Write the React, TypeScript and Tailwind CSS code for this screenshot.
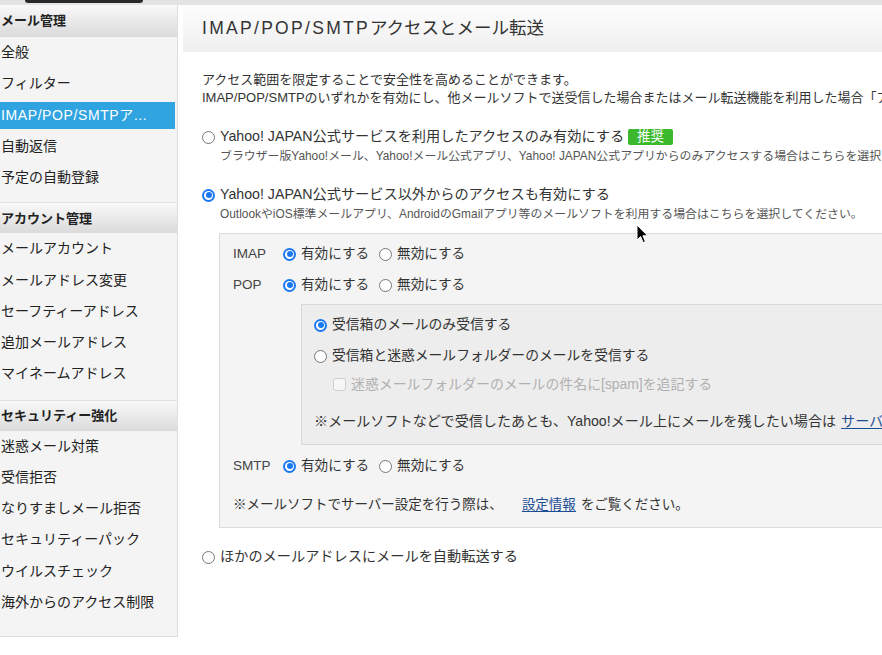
import type { ReactNode } from 'react'

type NavSection = { title: string; items: string[]; pb: string }

const SECTIONS: NavSection[] = [
  { title: 'メール管理', items: ['全般', 'フィルター', 'IMAP/POP/SMTPアクセスとメール転送', '自動返信', '予定の自動登録'], pb: 'pb-[9px]' },
  { title: 'アカウント管理', items: ['メールアカウント', 'メールアドレス変更', 'セーフティーアドレス', '追加メールアドレス', 'マイネームアドレス'], pb: 'pb-[10px]' },
  { title: 'セキュリティー強化', items: ['迷惑メール対策', '受信拒否', 'なりすましメール拒否', 'セキュリティーパック', 'ウイルスチェック', '海外からのアクセス制限'], pb: 'pb-[18px]' },
]

const ACTIVE = 'IMAP/POP/SMTPアクセスとメール転送'

function Radio({ checked }: { checked?: boolean }) {
  if (checked) {
    return (
      <span className="flex h-[13px] w-[13px] shrink-0 items-center justify-center rounded-full bg-[#1a78f2]">
        <span className="flex h-[9px] w-[9px] items-center justify-center rounded-full bg-white">
          <span className="h-[6px] w-[6px] rounded-full bg-[#1a78f2]" />
        </span>
      </span>
    )
  }
  return <span className="h-[13px] w-[13px] shrink-0 rounded-full border border-[#767676] bg-white" />
}

function Choice({ checked, children }: { checked?: boolean; children: ReactNode }) {
  return (
    <span className="flex items-center gap-[5px]">
      <Radio checked={checked} />
      <span>{children}</span>
    </span>
  )
}

function Toggle({ label, className }: { label: string; className?: string }) {
  return (
    <div className={`flex h-[20px] items-center ${className ?? ''}`}>
      <span className="w-[50px] text-[13.5px] text-[#444]">{label}</span>
      <div className="flex items-center gap-[10px] text-[13.6px]">
        <Choice checked>有効にする</Choice>
        <Choice>無効にする</Choice>
      </div>
    </div>
  )
}

function Sidebar() {
  return (
    <nav className="w-[178px] shrink-0 border-r border-b border-[#dedede] bg-[#f4f4f4] text-[#222]">
      {SECTIONS.map((section, i) => (
        <div key={section.title} className={section.pb}>
          <div
            className={[
              'flex items-center bg-gradient-to-b from-[#f9f9f9] to-[#dadada] pl-px text-[13px] font-bold',
              i === 0 ? 'h-[32px]' : 'h-[31px] border-t border-[#e2e2e2]',
            ].join(' ')}
          >
            {section.title}
          </div>
          {section.items.map((item) =>
            item === ACTIVE ? (
              <div key={item} className="flex h-[31.25px] items-center pr-[2px]">
                <div className="flex h-[27px] w-full items-center overflow-hidden bg-[#30a4e1] pl-px pr-[14px] text-[14px] text-white">
                  <span className="truncate tracking-[0.6px]">{item}</span>
                </div>
              </div>
            ) : (
              <div key={item} className="flex h-[31.25px] items-center pl-px text-[14px]">
                {item}
              </div>
            ),
          )}
        </div>
      ))}
    </nav>
  )
}

export default function App() {
  return (
    <div
      className="relative h-[655px] w-[882px] overflow-hidden bg-white text-[#333]"
      style={{ fontFamily: '"Liberation Sans", "Noto Sans CJK JP", sans-serif' }}
    >
      <div className="h-[5px] bg-[#e3e3e3]">
        <div className="ml-[25px] h-[3px] w-[118px] rounded-b-[3px] bg-[#2a2a2a]" />
      </div>

      <div className="flex items-start">
        <Sidebar />

        <main className="ml-[5px] min-w-0 flex-1 overflow-hidden whitespace-nowrap">
          <header className="flex h-[47px] items-center bg-gradient-to-b from-[#fdfdfd] to-[#efefef] pl-[19px]">
            <h1 className="text-[17.5px] text-[#333]">
              <span className="tracking-[2.3px]">IMAP/POP/SMTP</span>アクセスとメール転送
            </h1>
          </header>

          <div className="pl-[19px] pt-[19px]">
            <p className="text-[13px] leading-[18px]">
              アクセス範囲を限定することで安全性を高めることができます。
              <br />
              IMAP/POP/SMTPのいずれかを有効にし、他メールソフトで送受信した場合またはメール転送機能を利用した場合「アクセス履歴」に記録されます。
            </p>

            <div className="mt-[20px] flex h-[20px] items-center text-[14.2px]">
              <Choice>
                Yahoo! JAPAN公式サービスを利用したアクセスのみ有効にする
              </Choice>
              <span className="ml-[4px] flex h-[16px] items-center rounded-[2px] bg-[#3cb82c] px-[9px] text-[13.5px] text-white">
                推奨
              </span>
            </div>
            <p className="flex h-[20px] items-center pl-[18px] text-[11.9px] text-[#555]">
              ブラウザー版Yahoo!メール、Yahoo!メール公式アプリ、Yahoo! JAPAN公式アプリからのみアクセスする場合はこちらを選択してください。
            </p>

            <div className="mt-[18px] flex h-[20px] items-center text-[14.2px]">
              <Choice checked>Yahoo! JAPAN公式サービス以外からのアクセスも有効にする</Choice>
            </div>
            <p className="flex h-[20px] items-center pl-[18px] text-[11.9px] text-[#555]">
              OutlookやiOS標準メールアプリ、AndroidのGmailアプリ等のメールソフトを利用する場合はこちらを選択してください。
            </p>

            <section className="mt-[8px] ml-[17px] w-[720px] border border-[#dcdcdc] bg-[#f4f4f4] pb-[12px] pl-[13px] pt-[10px] text-[13.8px]">
              <Toggle label="IMAP" />
              <Toggle label="POP" className="mt-[11px]" />

              <div className="ml-[68px] mt-[9px] border border-[#d9d9d9] bg-[#ededed] pb-[12px] pl-[12px] pt-[10px]">
                <div className="flex h-[20px] items-center">
                  <Choice checked>受信箱のメールのみ受信する</Choice>
                </div>
                <div className="mt-[11px] flex h-[20px] items-center">
                  <Choice>受信箱と迷惑メールフォルダーのメールを受信する</Choice>
                </div>
                <div className="mt-[8px] flex h-[20px] items-center gap-[5px] pl-[19px] text-[13.9px] text-[#b0b0b0]">
                  <span className="h-[13px] w-[13px] shrink-0 rounded-[3px] border border-[#cfcfcf] bg-[#f6f6f6]" />
                  <span>迷惑メールフォルダーのメールの件名に[spam]を追記する</span>
                </div>
                <p className="mt-[18px] flex h-[20px] items-center text-[14.1px]">
                  ※メールソフトなどで受信したあとも、Yahoo!メール上にメールを残したい場合は
                  <a href="#" className="ml-[5px] text-[#1d4e94] underline underline-offset-2">
                    サーバーにメールを残す設定
                  </a>
                </p>
              </div>

              <Toggle label="SMTP" className="mt-[11px]" />
              <p className="mt-[19px] flex h-[20px] items-center text-[13.5px]">
                ※メールソフトでサーバー設定を行う際は、
                <a href="#" className="ml-[19px] text-[#1d4e94] underline underline-offset-2">
                  設定情報
                </a>
                <span className="ml-[5px]">をご覧ください。</span>
              </p>
            </section>

            <div className="mt-[19px] flex h-[20px] items-center text-[14.2px]">
              <Choice>ほかのメールアドレスにメールを自動転送する</Choice>
            </div>
          </div>
        </main>
      </div>

      <svg
        className="pointer-events-none absolute left-[636px] top-[224px]"
        width="13"
        height="20"
        viewBox="0 0 13 20"
      >
        <path
          d="M1 1 L1 16 L4.6 12.6 L7.2 18.6 L9.4 17.6 L6.9 11.8 L11.6 11.8 Z"
          fill="#000"
          stroke="#fff"
          strokeWidth="1"
          strokeLinejoin="round"
        />
      </svg>
    </div>
  )
}
